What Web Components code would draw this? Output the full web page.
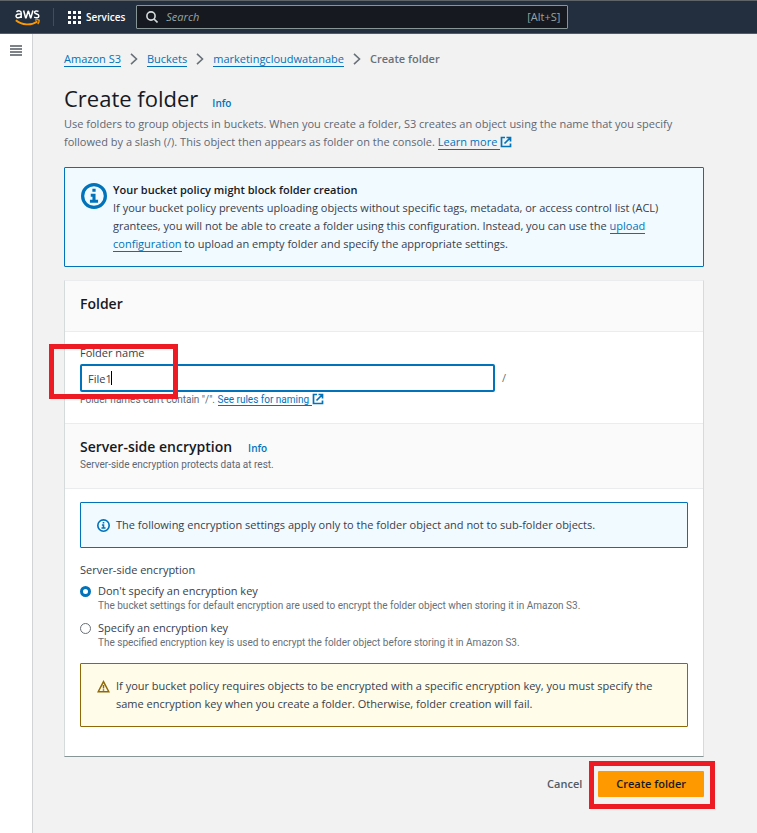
<!DOCTYPE html>
<html lang="en">
<head>
<meta charset="utf-8">
<meta name="viewport" content="width=device-width, initial-scale=1">
<title>Create folder - S3</title>
<style>
  html {
    min-height: 100%;
    background: #f2f2f2;
  }

  body {
    margin: 0;
    font-family: "Open Sans", "Noto Sans", sans-serif;
    font-size: 11px;
    line-height: 18px;
    color: #37404b;
    --link: #0073bb;
    --muted: #5f6773;
    --heading: #16191f;
    --body: 11px;
    --small: 10px;
    --small-family: Roboto, sans-serif;
  }
</style>
</head>
<body>
<s3-console></s3-console>

<script>
const icons = {
  external: '<svg viewBox="0 0 12 12" width="12" height="12" fill="none" stroke="currentColor" stroke-width="1.700"><path d="M5 1.500H1.500v9h9V7.500M6.500 1.500h4v4M10.500 1.500l-6 6"/></svg>',
  info: '<svg viewBox="0 0 16 16" width="100%" height="100%" fill="none" stroke="currentColor" stroke-width="2"><circle cx="8" cy="8" r="7"/><path d="M6 7.500h2V11M5.500 11.200h5M7 4.500h2" stroke-width="1.900"/></svg>',
  warning: '<svg viewBox="0 0 16 16" width="100%" height="100%" fill="none" stroke="currentColor" stroke-width="1.800"><path d="M8 2 1.500 14.500h13zM8 6v4.500M8 11.500v1.800"/></svg>'
};

class ConsoleHeader extends HTMLElement {
  constructor() {
    super();
    this.attachShadow({ mode: 'open' });
  }

  connectedCallback() {
    this.shadowRoot.innerHTML = `
      <style>
        :host {
          display: flex;
          align-items: center;
          box-sizing: border-box;
          height: 34px;
          padding: 0 15px;
          background: #232f3e;
          border-top: 1px solid #5f6468;
          border-bottom: 1px solid #545b64;
        }

        .logo {
          display: block;
          width: 25px;
          height: 17px;
        }

        .divider {
          width: 1px;
          height: 18px;
          margin: 0 14px 0 13px;
          background: #414d5c;
        }

        button {
          display: flex;
          align-items: center;
          gap: 5px;
          padding: 0;
          border: 0;
          background: none;
          color: #fff;
          font: 600 10px/18px "Open Sans", sans-serif;
        }

        label {
          display: flex;
          align-items: center;
          flex: 0 1 432px;
          box-sizing: border-box;
          height: 24px;
          min-width: 0;
          margin-left: 11px;
          padding: 0 7px 0 9px;
          border: 1px solid #879596;
          border-radius: 1px;
          background: #16191f;
          color: #95a5a6;
        }

        input {
          flex: 1;
          min-width: 0;
          padding: 0 0 0 8px;
          border: 0;
          outline: 0;
          background: none;
          color: #fff;
          font: 11px/18px "Open Sans", sans-serif;
        }

        input::placeholder {
          color: #95a5a6;
          font-style: italic;
        }
      </style>

      <a class="logo" href="#" aria-label="AWS home">
        <svg viewBox="0 0 25 17" width="25" height="17" fill="none">
          <g stroke="#fff" stroke-width="1.500" stroke-linejoin="round">
            <path d="M1.500 2.800C3 1.600 6.200 1.200 6.200 3.900V9M6.200 5.200C3.500 4.600 1 5.100 1 7.100c0 2.400 4 2.200 5.200 0"/>
            <path d="m8.600 1.500 2 7.200h.5l2-6.500h.4l2 6.500h.4l2-7.200"/>
            <path d="M23.500 2.400c-1.500-.8-4-.7-4 .9 0 2.200 4.400 1.300 4.400 3.600 0 2.100-3 2.300-4.700 1.200"/>
          </g>
          <path d="M.8 11.300c6 5 15.600 5.500 21.600 1.200" stroke="#f90" stroke-width="1.800"/>
          <path d="M20 11.100c1.800-.7 3.200-.6 4.100 0 .2 1.300-.3 2.900-1.400 4" stroke="#f90" stroke-width="1.300"/>
        </svg>
      </a>
      <span class="divider"></span>
      <button type="button">
        <svg viewBox="0 0 13 13" width="13" height="13" fill="#fff"><path d="M0 0h3v3H0zM5 0h3v3H5zM10 0h3v3h-3zM0 5h3v3H0zM5 5h3v3H5zM10 5h3v3h-3zM0 10h3v3H0zM5 10h3v3H5zM10 10h3v3h-3z"/></svg>
        Services
      </button>
      <label>
        <svg viewBox="0 0 12 12" width="12" height="12" fill="none" stroke="#d5dbdb" stroke-width="1.600"><circle cx="5" cy="5" r="4.100"/><path d="m8 8 3.500 3.500"/></svg>
        <input type="search" placeholder="Search" aria-label="Search">
        <span>[Alt+S]</span>
      </label>
    `;
  }
}

class SideRail extends HTMLElement {
  constructor() {
    super();
    this.attachShadow({ mode: 'open' });
  }

  connectedCallback() {
    this.shadowRoot.innerHTML = `
      <style>
        :host {
          display: block;
          box-sizing: border-box;
          width: 33px;
          padding: 11px 10px;
          background: #fff;
          border-right: 1px solid #d0d4d4;
        }

        button {
          display: block;
          padding: 0;
          border: 0;
          background: none;
          color: #545b64;
        }

        svg {
          display: block;
        }
      </style>

      <button type="button" aria-label="Open navigation">
        <svg viewBox="0 0 12 11" width="12" height="11" stroke="currentColor" stroke-width="1.400"><path d="M0 1h12M0 4h12M0 7h12M0 10h12"/></svg>
      </button>
    `;
  }
}

class TextLink extends HTMLElement {
  constructor() {
    super();
    this.attachShadow({ mode: 'open' });
  }

  connectedCallback() {
    const external = this.hasAttribute('external');

    this.shadowRoot.innerHTML = `
      <style>
        :host {
          display: inline;
        }

        a {
          color: var(--link);
          text-decoration: none;
        }

        .text {
          border-bottom: 1px solid var(--link);
        }

        :host([info]) a {
          font-size: var(--small);
          font-weight: 600;
        }

        :host([info]) .text {
          border: 0;
        }

        svg {
          vertical-align: -2px;
        }
      </style>

      <a href="#"><span class="text"><slot></slot>${external ? '&nbsp;' : ''}</span>${external ? icons.external : ''}</a>
    `;
  }
}

class BreadcrumbTrail extends HTMLElement {
  constructor() {
    super();
    this.attachShadow({ mode: 'open' });
  }

  connectedCallback() {
    const chevron = '<svg viewBox="0 0 8 12" width="8" height="12" fill="none" stroke="#687078" stroke-width="1.600"><path d="m1 .8 5.500 5.200L1 11.200"/></svg>';

    this.shadowRoot.innerHTML = `
      <style>
        :host {
          display: block;
        }

        nav {
          display: flex;
          align-items: center;
          gap: 9px;
        }

        b {
          color: #687078;
          font-weight: 600;
        }
      </style>

      <nav aria-label="Breadcrumbs">
        <text-link>Amazon S3</text-link>${chevron}
        <text-link>Buckets</text-link>${chevron}
        <text-link>marketingcloudwatanabe</text-link>${chevron}
        <b aria-current="page">Create folder</b>
      </nav>
    `;
  }
}

class FlashAlert extends HTMLElement {
  constructor() {
    super();
    this.attachShadow({ mode: 'open' });
  }

  connectedCallback() {
    const icon = this.getAttribute('type') === 'warning' ? icons.warning : icons.info;

    this.shadowRoot.innerHTML = `
      <style>
        :host {
          display: flex;
          gap: 6px;
          padding: 13px 16px;
          border: 1px solid var(--link);
          border-radius: 1px;
          background: #f1faff;
          --icon: var(--link);
        }

        :host([type="warning"]) {
          border-color: #906806;
          background: #fffce9;
          --icon: #906806;
        }

        .icon {
          flex: none;
          width: 13px;
          height: 13px;
          margin-top: 3px;
          color: var(--icon);
        }

        :host([large]) .icon {
          width: 26px;
          height: 26px;
          margin-top: 2px;
        }

        svg {
          display: block;
        }
      </style>

      <span class="icon">${icon}</span>
      <div><slot></slot></div>
    `;
  }
}

class SectionHeader extends HTMLElement {
  constructor() {
    super();
    this.attachShadow({ mode: 'open' });
  }

  connectedCallback() {
    this.shadowRoot.innerHTML = `
      <style>
        :host {
          display: block;
          padding: 12px 15px 16px;
          background: #fafafa;
          border-bottom: 1px solid #eaeded;
        }

        .row {
          display: flex;
          align-items: baseline;
          gap: 16px;
        }

        h2 {
          margin: 0;
          color: var(--heading);
          font-size: 14px;
          font-weight: 600;
          line-height: 22px;
        }

        ::slotted([slot="description"]) {
          display: block;
          color: var(--muted);
          font-family: var(--small-family);
          font-size: var(--small);
          line-height: 14px;
        }
      </style>

      <div class="row"><h2><slot></slot></h2><slot name="info"></slot></div>
      <slot name="description"></slot>
    `;
  }
}

// red frame drawn over the content of its positioned parent
class MarkFrame extends HTMLElement {
  constructor() {
    super();
    this.attachShadow({ mode: 'open' });
  }

  connectedCallback() {
    this.shadowRoot.innerHTML = `
      <style>
        :host {
          display: block;
          position: absolute;
          box-sizing: border-box;
          border: 5px solid #ed1c24;
          pointer-events: none;
        }
      </style>
    `;
  }
}

class FolderNameField extends HTMLElement {
  constructor() {
    super();
    this.attachShadow({ mode: 'open' });
  }

  connectedCallback() {
    this.shadowRoot.innerHTML = `
      <style>
        :host {
          display: block;
          position: relative;
          padding: 12px 15px 16px;
        }

        label {
          display: block;
        }

        .row {
          display: flex;
          align-items: center;
          gap: 7px;
          margin: 2px 0 1px;
          color: #687078;
        }

        .control {
          position: relative;
          flex: 0 1 415px;
        }

        input {
          display: block;
          box-sizing: border-box;
          width: 100%;
          height: 28px;
          padding: 0 6px;
          border: 2px solid var(--link);
          border-radius: 2px;
          outline: 0;
          background: #fff;
          color: #37404b;
          font: 11px/18px "Open Sans", sans-serif;
        }

        .caret {
          position: absolute;
          top: 7px;
          left: 31px;
          width: 1px;
          height: 14px;
          background: #000;
        }

        .hint {
          color: var(--muted);
          font-family: var(--small-family);
          font-size: var(--small);
          line-height: 14px;
        }

        mark-frame {
          top: 12px;
          left: -16px;
          width: 129px;
          height: 55px;
        }
      </style>

      <label for="name">Folder name</label>
      <div class="row">
        <div class="control">
          <input id="name" type="text" value="File1" aria-describedby="hint">
          <span class="caret"></span>
        </div>
        <span>/</span>
      </div>
      <div class="hint" id="hint">Folder names can't contain "/". <text-link external>See rules for naming</text-link></div>
      <mark-frame></mark-frame>
    `;
  }
}

class EncryptionOptions extends HTMLElement {
  constructor() {
    super();
    this.attachShadow({ mode: 'open' });
  }

  connectedCallback() {
    this.shadowRoot.innerHTML = `
      <style>
        :host {
          display: block;
        }

        fieldset {
          display: grid;
          gap: 7px;
          min-width: 0;
          margin: 0;
          padding: 0;
          border: 0;
        }

        legend {
          margin-bottom: 4px;
          padding: 0;
        }

        .option {
          display: grid;
          grid-template-columns: 11px 1fr;
          column-gap: 7px;
        }

        input {
          appearance: none;
          box-sizing: border-box;
          width: 11px;
          height: 11px;
          margin: 3px 0 0;
          border: 1px solid #687078;
          border-radius: 50%;
          background: #fff;
        }

        input:checked {
          border: 3px solid var(--link);
        }

        label {
          line-height: 16px;
        }

        small {
          grid-column: 2;
          color: #687078;
          font-family: var(--small-family);
          font-size: var(--small);
          line-height: 14px;
        }
      </style>

      <fieldset>
        <legend>Server-side encryption</legend>
        <div class="option">
          <input type="radio" name="sse" id="none" aria-describedby="none-text" checked>
          <label for="none">Don't specify an encryption key</label>
          <small id="none-text">The bucket settings for default encryption are used to encrypt the folder object when storing it in Amazon S3.</small>
        </div>
        <div class="option">
          <input type="radio" name="sse" id="key" aria-describedby="key-text">
          <label for="key">Specify an encryption key</label>
          <small id="key-text">The specified encryption key is used to encrypt the folder object before storing it in Amazon S3.</small>
        </div>
      </fieldset>
    `;
  }
}

class FormActions extends HTMLElement {
  constructor() {
    super();
    this.attachShadow({ mode: 'open' });
  }

  connectedCallback() {
    this.shadowRoot.innerHTML = `
      <style>
        :host {
          display: flex;
          justify-content: flex-end;
          align-items: center;
          gap: 16px;
        }

        button {
          padding: 0;
          border: 0;
          border-radius: 1px;
          background: none;
          color: #545b64;
          font: 600 11px/26px "Open Sans", sans-serif;
        }

        .primary {
          padding: 0 18px;
          background: #ff9900;
          color: var(--heading);
        }

        .marked {
          position: relative;
        }

        mark-frame {
          inset: -10px -11px -12px -9px;
        }
      </style>

      <button type="button">Cancel</button>
      <span class="marked">
        <button type="submit" class="primary">Create folder</button>
        <mark-frame></mark-frame>
      </span>
    `;
  }
}

class S3Console extends HTMLElement {
  constructor() {
    super();
    this.attachShadow({ mode: 'open' });
  }

  connectedCallback() {
    this.shadowRoot.innerHTML = `
      <style>
        :host {
          display: flex;
          flex-direction: column;
          min-height: 100vh;
        }

        .layout {
          display: flex;
          flex: 1;
        }

        main {
          flex: 1;
          min-width: 0;
          padding: 16px 53px 24px 31px;
        }

        .title {
          display: flex;
          align-items: baseline;
          gap: 14px;
          margin-top: 14px;
        }

        h1 {
          margin: 0;
          color: var(--heading);
          font-size: 22px;
          font-weight: 400;
          line-height: 32px;
        }

        .intro {
          margin: 1px 0 16px;
          color: var(--muted);
        }

        h3 {
          margin: 0;
          color: var(--heading);
          font-size: var(--body);
          font-weight: 600;
        }

        .card {
          margin: 13px 0 14px;
          background: #fff;
          border: 1px solid #d5dbdb;
          border-top-color: #eaeded;
          border-bottom-color: #879596;
        }

        .encryption {
          border-top: 1px solid #eaeded;
        }

        .body {
          display: grid;
          gap: 13px;
          padding: 13px 15px 29px;
        }
      </style>

      <console-header></console-header>
      <div class="layout">
        <side-rail></side-rail>
        <main>
          <breadcrumb-trail></breadcrumb-trail>
          <div class="title"><h1>Create folder</h1><text-link info>Info</text-link></div>
          <p class="intro">Use folders to group objects in buckets. When you create a folder, S3 creates an object using the name that you specify followed by a slash (/). This object then appears as folder on the console. <text-link external>Learn more</text-link></p>
          <flash-alert large>
            <h3>Your bucket policy might block folder creation</h3>
            If your bucket policy prevents uploading objects without specific tags, metadata, or access control list (ACL) grantees, you will not be able to create a folder using this configuration. Instead, you can use the <text-link>upload configuration</text-link> to upload an empty folder and specify the appropriate settings.
          </flash-alert>
          <div class="card">
            <section-header>Folder</section-header>
            <folder-name-field></folder-name-field>
            <section-header class="encryption">
              Server-side encryption
              <text-link info slot="info">Info</text-link>
              <span slot="description">Server-side encryption protects data at rest.</span>
            </section-header>
            <div class="body">
              <flash-alert>The following encryption settings apply only to the folder object and not to sub-folder objects.</flash-alert>
              <encryption-options></encryption-options>
              <flash-alert type="warning">If your bucket policy requires objects to be encrypted with a specific encryption key, you must specify the same encryption key when you create a folder. Otherwise, folder creation will fail.</flash-alert>
            </div>
          </div>
          <form-actions></form-actions>
        </main>
      </div>
    `;
  }
}

customElements.define('text-link', TextLink);
customElements.define('mark-frame', MarkFrame);
customElements.define('console-header', ConsoleHeader);
customElements.define('side-rail', SideRail);
customElements.define('breadcrumb-trail', BreadcrumbTrail);
customElements.define('flash-alert', FlashAlert);
customElements.define('section-header', SectionHeader);
customElements.define('folder-name-field', FolderNameField);
customElements.define('encryption-options', EncryptionOptions);
customElements.define('form-actions', FormActions);
customElements.define('s3-console', S3Console);
</script>
</body>
</html>
